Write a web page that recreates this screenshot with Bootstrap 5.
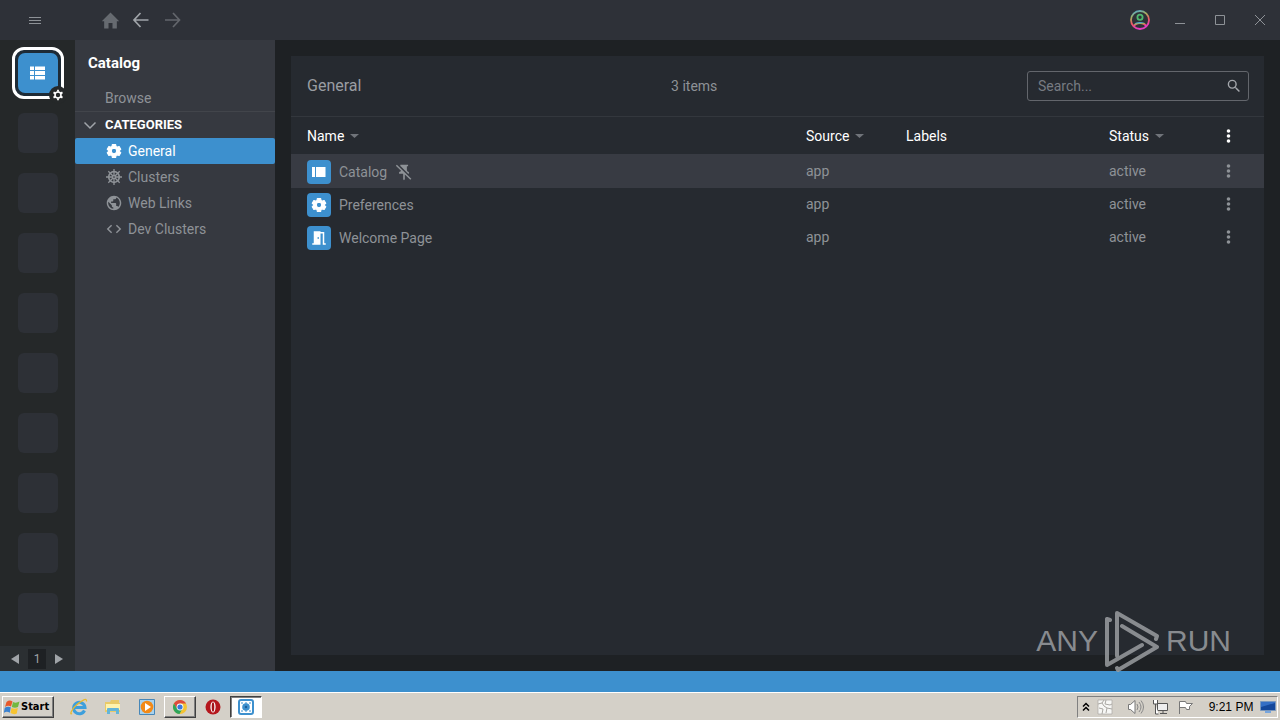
<!DOCTYPE html>
<html lang="en" data-bs-theme="dark">
<head>
<meta charset="utf-8">
<meta name="viewport" content="width=device-width, initial-scale=1">
<title>Catalog</title>
<link href="https://cdn.jsdelivr.net/npm/bootstrap@5.3.0/dist/css/bootstrap.min.css" rel="stylesheet">
<style>
body{font:14px/20px Roboto,sans-serif;background:#1e2124;color:#8e9297;min-height:100vh}
svg{display:block;fill:currentColor;flex:none}
button{background:none;border:0;padding:0;color:inherit}
a{color:inherit;text-decoration:none}
.titlebar{height:40px;background:#2e3138;padding:0 10px 0 25px}
.titlebar .gap-nav{margin-left:56px;gap:11px}
.nav-home{color:#666a70}.nav-back{color:#a0a4a9}.nav-forward{color:#63666c}
.window-btns{gap:20px}
.line-icon{fill:none;stroke:currentColor}
.hotbar{width:75px;background:#252829}
.slots{padding:7px 0 13px 1px;gap:20px}
.slot{width:40px;height:40px;border-radius:6px;background:#2d3036}
.slot-active{width:52px;height:52px;border:3px solid #fff;border-radius:12px;padding:3px;background:#1e2b36;margin-bottom:-6px}
.slot-active button{width:40px;height:40px;background:#3d90ce;color:#fff;border-radius:7px}
.slot-gear{right:-6px;bottom:-8px;width:18px;height:18px;border-radius:9px;background:#252829;color:#fff}
.pager{height:25px;background:#2b2f32;color:#a0a4a8;font-size:12px;gap:9px;padding-right:1px}
.page-no{width:18px;height:20px;background:#1e2124}
.sidebar{width:200px;background:#363940}
.sidebar h1{font-size:15px;line-height:20px;font-weight:700;color:#fff;padding:13px 13px 15px}
.browse{height:24px;padding:0 30px 0;border-bottom:1px solid #42454b}
.cat-head{height:26px;padding-left:8px;gap:8px;font-size:13px;font-weight:700;color:#fff}
.cat-item{height:26px;padding-left:31px;gap:6px}
.cat-item.active{background:#3d90ce;color:#fff;border-radius:2px}
.content-area{padding:16px}
.panel{background:#262a30}
.panel-head{height:61px;padding:0 15px 0 16px;border-bottom:1px solid #33373d}
.panel-head h2{font-size:16px;line-height:20px;font-weight:400;color:#9a9da2}
.search-box{width:222px;height:30px;border:1px solid #63666c;border-radius:3px;padding:0 7px 0 10px}
.search-box input{background:none;border:0;outline:0;color:inherit;padding:0}
.search-box input::placeholder{color:#777b82;opacity:1}
.search-box svg{color:#a5a8ad}
.entities{table-layout:fixed;border-collapse:collapse}
.entities th{height:37px;padding:0;font-weight:400;color:#fff}
.entities th span{gap:6px}
.entities th span svg{color:#70747a}
.entities button{display:block}
.entities td{height:33px;padding:6px 0 3px}
.entities td:not(:first-child){padding:5px 0 4px}
.entities tbody tr{height:33px}
.entities th:first-child,.entities td:first-child{padding-left:16px}
.entities tr.selected{background:#383b43;box-shadow:0 1px #383b43}
.tile{width:24px;height:24px;border-radius:4px;background:#3d90ce;color:#fff}
.col-source{width:100px}.col-labels{width:203px}.col-status{width:112px}.col-menu{width:43px}
.watermark{right:49px;bottom:48px;color:#9a9da0;opacity:.85;gap:6px;font:30px/62px "Liberation Sans",sans-serif}
.statusbar{height:21px;background:#3d90ce}
.taskbar{height:28px;background:#d4d0c8;border-top:1px solid #fff;color:#000;padding:2px 2px 1px 2px}
.raised{height:22px;background:#d4d0c8;border:1px solid;border-color:#fff #404040 #404040 #fff;box-shadow:inset -1px -1px #808080}
.start{width:52px;font:700 11px/16px "DejaVu Sans Condensed","DejaVu Sans",sans-serif;color:#000;gap:1px;padding:0 1px}
.task-btn{width:34px;height:22px}
.task-btn.raised{width:32px}
.task-btn.pressed{width:32px;background:#fff;border:1px solid;border-color:#404040 #fff #fff #404040;box-shadow:inset 1px 1px #808080}
.launch{margin-left:8px}
.tray{width:201px;height:22px;border:1px solid;border-color:#808080 #fff #fff #808080;font:12px/16px "Liberation Sans",sans-serif;padding:0 1px 0 4px}
</style>
</head>
<body class="d-flex flex-column">
<header class="titlebar d-flex align-items-center">
  <button aria-label="Menu"><svg class="line-icon" width="20" height="20"><path d="M4 7.500h12M4 10.500h12M4 13.500h12"/></svg></button>
  <nav class="gap-nav d-flex align-items-center" aria-label="History">
    <button class="nav-home" aria-label="Home"><svg width="19" height="19" viewBox="0 0 24 24"><path d="M9.500 22v-7h5v7h5.500v-9h3L12 2 1 13h3v9z"/></svg></button>
    <button class="nav-back" aria-label="Back"><svg class="line-icon" width="20" height="20" stroke-width="1.700"><path d="M17.500 10H3M9.500 3 3 10l6.500 7"/></svg></button>
    <button class="nav-forward" aria-label="Forward"><svg class="line-icon" width="20" height="20" stroke-width="1.700"><path d="M3 10h14.500M11 3l6.500 7-6.500 7"/></svg></button>
  </nav>
  <div class="window-btns d-flex align-items-center ms-auto">
    <button aria-label="Account"><svg class="line-icon" width="20" height="20" style="stroke:url(#rainbow)" stroke-width="1.800"><defs><linearGradient id="rainbow" x1="0" y1="0" x2=".3" y2="1"><stop stop-color="#4aa7d8"/><stop offset=".35" stop-color="#a4b060"/><stop offset=".65" stop-color="#ef5a62"/><stop offset="1" stop-color="#e53cc0"/></linearGradient></defs><circle cx="10" cy="10" r="9"/><circle cx="10" cy="7.300" r="2.600" stroke="#4fb870" style="stroke:#4fb870"/><path d="M4 16c2-4 10-4 12 0"/></svg></button>
    <button aria-label="Minimize"><svg class="line-icon" width="20" height="20"><path d="M5 13.500h10"/></svg></button>
    <button aria-label="Maximize"><svg class="line-icon" width="20" height="20"><path d="M5.500 5.500h9v9h-9z"/></svg></button>
    <button aria-label="Close"><svg class="line-icon" width="20" height="20"><path d="m5 5 10 10M15 5 5 15"/></svg></button>
  </div>
</header>

<main class="d-flex flex-grow-1 position-relative">
  <aside class="hotbar d-flex flex-column flex-shrink-0">
    <div class="slots d-flex flex-column align-items-center">
      <div class="slot-active position-relative">
        <button class="d-flex align-items-center justify-content-center" aria-label="Catalog"><svg width="20" height="20" viewBox="0 0 20 20"><path d="M2 3.500h4V7H2zM7 3.500h10V7H7zM2 8h4v4H2zM7 8h10v4H7zM2 13h4v3.500H2zM7 13h10v3.500H7z"/></svg></button>
        <span class="slot-gear position-absolute d-flex align-items-center justify-content-center"><svg width="12" height="12" viewBox="0 0 12 12"><circle cx="6" cy="6" r="3" fill="none" stroke="currentColor" stroke-width="1.600"/><path stroke="currentColor" stroke-width="1.800" d="M6 .8v2M6 9.200v2M1.500 3.400l1.700 1M8.800 7.600l1.700 1M1.500 8.600l1.700-1M8.800 4.400l1.700-1"/></svg></span>
      </div>
      <div class="slot"></div><div class="slot"></div><div class="slot"></div><div class="slot"></div><div class="slot"></div><div class="slot"></div><div class="slot"></div><div class="slot"></div><div class="slot"></div>
    </div>
    <div class="pager d-flex align-items-center justify-content-center mt-auto">
      <button aria-label="Previous"><svg width="8" height="10"><path d="M8 0v10L0 5z"/></svg></button>
      <span class="page-no text-center">1</span>
      <button aria-label="Next"><svg width="8" height="10"><path d="M0 0v10l8-5z"/></svg></button>
    </div>
  </aside>

  <nav class="sidebar flex-shrink-0" aria-label="Catalog">
    <h1 class="m-0">Catalog</h1>
    <a class="browse d-block" href="#">Browse</a>
    <div class="cat-head d-flex align-items-center"><svg class="line-icon nav-back" width="14" height="14" stroke-width="1.500"><path d="m1.500 4.500 5.500 5.500 5.500-5.500"/></svg>CATEGORIES</div>
    <a class="cat-item active d-flex align-items-center" href="#"><svg width="16" height="16" viewBox="1 1 22 22"><path id="gear" fill-rule="evenodd" stroke="currentColor" stroke-linejoin="round" stroke-width="1.500" d="M9.800 3h4.400l.6 2.700 1.700 1 2.600-.8 2.200 3.800-2 1.800v1l2 1.800-2.200 3.800-2.600-.8-1.700 1-.6 2.700H9.800l-.6-2.700-1.700-1-2.600.8-2.200-3.800 2-1.800v-1l-2-1.800 2.200-3.800 2.600.8 1.700-1zM12 8.300a3.700 3.700 0 1 0 0 7.400 3.700 3.700 0 0 0 0-7.400z"/></svg>General</a>
    <a class="cat-item d-flex align-items-center" href="#"><svg class="line-icon" width="16" height="16" stroke-width="1.300"><circle cx="8" cy="8" r="5.300" stroke-width="1.700"/><circle cx="8" cy="8" r="1.500"/><path d="M8 0v6.500M8 9.500V16M0 8h6.500M9.500 8H16M2.300 2.300 7 7M9 9l4.700 4.700M13.700 2.300 9 7M7 9l-4.700 4.700"/></svg>Clusters</a>
    <a class="cat-item d-flex align-items-center" href="#"><svg width="16" height="16" viewBox="1 1 22 22"><path d="M12 2C6.480 2 2 6.480 2 12s4.480 10 10 10 10-4.480 10-10S17.520 2 12 2zm-1 17.930c-3.950-.49-7-3.850-7-7.930 0-.62.080-1.210.21-1.790L9 15v1c0 1.100.9 2 2 2v1.930zm6.900-2.540c-.26-.81-1-1.390-1.900-1.390h-1v-3c0-.55-.45-1-1-1H8v-2h2c.55 0 1-.45 1-1V7h2c1.100 0 2-.9 2-2v-.41c2.930 1.190 5 4.060 5 7.410 0 2.080-.8 3.970-2.100 5.390z"/></svg>Web Links</a>
    <a class="cat-item d-flex align-items-center" href="#"><svg width="16" height="16" viewBox="1 1 22 22"><path d="M9.400 16.600 4.800 12l4.600-4.600L8 6l-6 6 6 6 1.400-1.400zm5.200 0 4.600-4.600-4.600-4.600L16 6l6 6-6 6-1.400-1.400z"/></svg>Dev Clusters</a>
  </nav>

  <div class="content-area flex-grow-1 d-flex">
    <section class="panel flex-grow-1">
      <div class="panel-head d-flex align-items-center justify-content-between">
        <h2 class="m-0">General</h2>
        <span>3 items</span>
        <label class="search-box d-flex align-items-center"><input class="flex-grow-1 w-100" type="text" placeholder="Search..." aria-label="Search"><svg width="14" height="14" viewBox="2 2 20 20"><path d="M15.500 14h-.79l-.28-.27A6.470 6.470 0 0 0 16 9.500 6.500 6.500 0 1 0 9.500 16c1.610 0 3.090-.59 4.230-1.570l.27.28v.79l5 4.990L20.490 19l-4.990-5zm-6 0a4.500 4.500 0 1 1 0-9 4.500 4.500 0 0 1 0 9z"/></svg></label>
      </div>
      <table class="entities w-100">
        <colgroup><col><col class="col-source"><col class="col-labels"><col class="col-status"><col class="col-menu"></colgroup>
        <thead><tr>
          <th><span class="d-flex align-items-center">Name <svg width="9" height="4"><path d="M0 0h9L4.500 4z"/></svg></span></th>
          <th><span class="d-flex align-items-center">Source <svg width="9" height="4"><path d="M0 0h9L4.500 4z"/></svg></span></th>
          <th>Labels</th>
          <th><span class="d-flex align-items-center">Status <svg width="9" height="4"><path d="M0 0h9L4.500 4z"/></svg></span></th>
          <th><button class="text-white" aria-label="Columns"><svg width="15" height="20"><g id="dots"><circle cx="7.500" cy="5" r="1.800"/><circle cx="7.500" cy="10" r="1.800"/><circle cx="7.500" cy="15" r="1.800"/></g></svg></button></th>
        </tr></thead>
        <tbody>
          <tr class="selected">
            <td><div class="d-flex align-items-center gap-2"><span class="tile d-flex align-items-center justify-content-center"><svg width="14" height="12"><path d="M0 1h3v10H0zM4 1h9.500v10H4z"/></svg></span>Catalog<button aria-label="Unpin"><svg width="18" height="18" viewBox="1 1 22 22"><path d="M17 3H7.500v2H8l9 9h1v-2c-1.500 0-2.500-1.500-2.500-3V5H17zM3.300 3 2 4.300l6.400 6.300C8.100 11.500 7.300 12 6 12v2h5v7l1 1 1-1v-6l6.700 6.500 1.300-1.300z"/></svg></button></div></td>
            <td>app</td><td></td><td>active</td><td><button aria-label="Actions"><svg width="15" height="20"><use href="#dots"/></svg></button></td>
          </tr>
          <tr>
            <td><div class="d-flex align-items-center gap-2"><span class="tile d-flex align-items-center justify-content-center"><svg width="16" height="16" viewBox="1 1 22 22"><use href="#gear"/></svg></span>Preferences</div></td>
            <td>app</td><td></td><td>active</td><td><button aria-label="Actions"><svg width="15" height="20"><use href="#dots"/></svg></button></td>
          </tr>
          <tr>
            <td><div class="d-flex align-items-center gap-2"><span class="tile d-flex align-items-center justify-content-center"><svg width="18" height="18" viewBox="0 0 24 24"><path d="M14 6v15H3v-2h2V3h9v1h5v15h2v2h-4V6h-3zm-4 5v2h2v-2h-2z"/></svg></span>Welcome Page</div></td>
            <td>app</td><td></td><td>active</td><td><button aria-label="Actions"><svg width="15" height="20"><use href="#dots"/></svg></button></td>
          </tr>
        </tbody>
      </table>
    </section>
  </div>
</main>
<div class="statusbar"></div>

<div class="watermark position-absolute d-flex align-items-center"><span>ANY</span><svg width="56" height="62" class="line-icon" stroke-width="4" stroke-linejoin="round" stroke-linecap="round"><path d="M6 10 3 9v46L38 35M13 46V3l40 23-1 3M18 16l35 21-39 23-1-2"/></svg><span>RUN</span></div>

<footer class="taskbar d-flex align-items-center">
  <button class="raised start d-flex align-items-center"><svg width="16" height="16"><path fill="#e8592b" d="M2.500 3q3-2.500 6-.5L7 7.500q-3-1.500-6 .5z"/><path fill="#72b840" d="M9 3q3 1.500 6.500-.5L14 8q-3 1.500-6.200 0z"/><path fill="#3b82d0" d="M.8 8.800q3-2 6-.5l-1 5.500q-3-2-6 0z"/><path fill="#f7c431" d="M7.500 9q3 1.500 6.300 0l-1 5.500q-3 1.500-6.300-.5z"/></svg>Start</button>
  <div class="d-flex align-items-center launch">
    <button class="task-btn d-flex align-items-center justify-content-center" aria-label="Internet Explorer"><svg width="18" height="18"><path fill="none" stroke="#3d9fdc" stroke-width="3" d="M14.500 12.500A5.700 5.700 0 1 1 15 9.500H4"/><path fill="none" stroke="#e8b92e" stroke-width="1.300" d="M2 15.500c-3 2 0-5 5-9S17-1 16.500 3.500"/></svg></button>
    <button class="task-btn d-flex align-items-center justify-content-center" aria-label="Explorer"><svg width="18" height="18"><path fill="#e9ca68" d="M1 4h5l1-2h8v3h1v9H1z"/><path fill="#fff3ad" d="M2 6h14v6H2z"/><path fill="#64b5d8" d="M3 16v-5q0-1 1-1h10q1 0 1 1v5h-3v-3H6v3z"/></svg></button>
    <button class="task-btn d-flex align-items-center justify-content-center" aria-label="Media Player"><svg width="18" height="18"><path fill="#a8d2ee" stroke="#4787b8" d="M1.500 1.500h15v15h-15z"/><circle cx="9" cy="9" r="6.300" fill="#f28a18"/><path fill="#fff" d="m7 5 6 4-6 4z"/></svg></button>
    <button class="task-btn raised d-flex align-items-center justify-content-center" aria-label="Chrome"><svg width="16" height="16"><circle cx="8" cy="8" r="7" fill="#f4c332"/><path fill="#dd4b3e" d="M1.900 4.500a7 7 0 0 1 12.200 0H8L5 10z"/><path fill="#2fa55c" d="M1.900 4.500A7 7 0 0 0 7.500 15l3-5.500H5z"/><circle cx="8" cy="8" r="3.400" fill="#fff"/><circle cx="8" cy="8" r="2.600" fill="#3978db"/></svg></button>
    <button class="task-btn d-flex align-items-center justify-content-center" aria-label="Opera"><svg width="16" height="16"><circle cx="8" cy="8" r="7.500" fill="#b5171d"/><ellipse cx="8" cy="8" rx="2.600" ry="5.500" fill="#fff"/><ellipse cx="8" cy="8" rx="1.300" ry="4.800" fill="#a31218"/></svg></button>
    <button class="task-btn pressed d-flex align-items-center justify-content-center" aria-label="Lens"><svg width="16" height="16"><rect x="1" y="1" width="14" height="14" rx="2" fill="#fff" stroke="#3d90ce" stroke-width="2"/><circle cx="8" cy="8" r="3.800" fill="#3d90ce"/><path stroke="#3d90ce" stroke-dasharray="2 2" d="M3 4h10M3 12h10"/><circle cx="8" cy="8" r="1.200" fill="#1d5e99"/></svg></button>
  </div>
  <div class="tray ms-auto d-flex align-items-center justify-content-between">
    <button aria-label="Show hidden icons"><svg class="line-icon" width="8" height="10" stroke-width="1.500"><path d="m1 4.500 3-3 3 3M1 8.500l3-3 3 3"/></svg></button>
    <svg width="16" height="16"><path fill="#f7f7f5" stroke="#aaa8a3" stroke-width=".7" d="M1 1h14v14H1z"/><path fill="none" stroke="#aaa8a3" d="m1 5 4-1 2 3M9 1 8 5l5 1M5 15l1-5-4-1M15 10l-5-1-1 5M7 7l3 2M5 4l2-3M13 6l2-1"/></svg>
    <span class="d-flex gap-2 ps-2">
    <svg class="line-icon" width="17" height="16"><path fill="#fff" stroke="#777" d="M1.500 5.500h2L8 1.500v13l-4.500-4h-2z"/><path stroke="#888" d="M10 5q2 3 0 6M12 3q4 5 0 10M14 1.500q5 6.500 0 13"/></svg>
    <svg class="line-icon" width="17" height="16"><path fill="#eee" stroke="#555" d="M5.500 4.500h10v7h-10zM8 14.500h7M11 12v2"/><path fill="#fff" stroke="#555" d="M1.500 1v4h4V1M3.500 5v10h3"/></svg>
    <svg class="line-icon" width="17" height="16"><path stroke="#777" fill="#fff" d="M2.500 15V2.500h6l1 2h6l-3 3v3h-3l-1-2h-6"/></svg></span>
    <span class="ps-2">9:21 PM</span>
    <svg width="16" height="14"><path fill="#356fc5" stroke="#7b98bd" d="M.5 1.500h15v9H.500z"/><path fill="#15489b" d="m1 7 14-4v7H1z"/><path fill="#77a5dd" d="M5 11h6v2H5z"/></svg>
  </div>
</footer>
<script src="https://cdn.jsdelivr.net/npm/bootstrap@5.3.0/dist/js/bootstrap.bundle.min.js"></script>
</body>
</html>
